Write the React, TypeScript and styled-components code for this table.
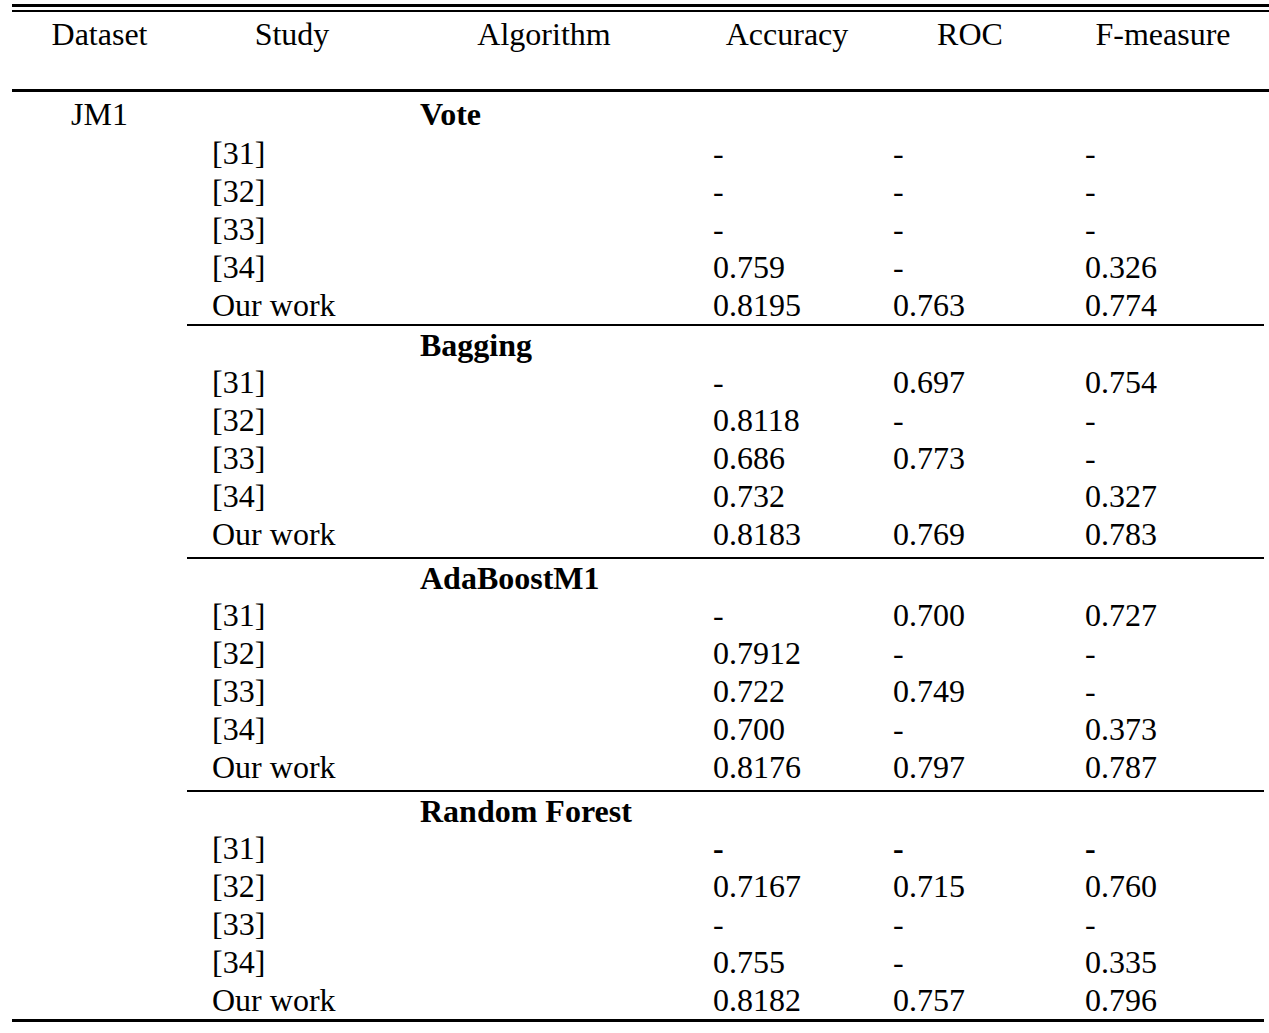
import React from 'react';
import styled, { createGlobalStyle } from 'styled-components';

const GlobalStyle = createGlobalStyle`
  body {
    margin: 0;
    background: #fff;
  }
`;

// study | algorithm | accuracy | roc | f-measure
const BODY_COLS = '210px 294px 192px 174px 1fr';

const Table = styled.div`
  margin-left: 12px;
  padding-top: 4px;
  font-family: 'Liberation Serif', 'Times New Roman', serif;
  font-size: 32px;
  line-height: 38px;
  color: #000;
`;

const DoubleRule = styled.div`
  height: 3px;
  border-top: 3px solid #000;
  border-bottom: 2px solid #000;
`;

const HeaderRow = styled.div`
  display: grid;
  grid-template-columns: 175px ${BODY_COLS};
  height: 74px;
  padding-top: 3px;
  border-bottom: 3px solid #000;
`;

const HeaderCell = styled.div`
  text-align: center;
  white-space: nowrap;
`;

const Body = styled.div`
  display: flex;
  margin-right: 5px;
  border-bottom: 3px solid #000;
`;

const DatasetCell = styled.div`
  width: 175px;
  flex: none;
  padding-top: 3px;
  text-align: center;
`;

const Groups = styled.div`
  flex: 1;
  display: flex;
  flex-direction: column;
`;

const Group = styled.div<{ $first?: boolean; $last?: boolean }>`
  padding-top: ${p => (p.$first ? '3px' : '0')};
  padding-bottom: ${p => (p.$last || p.$first ? '0' : '4px')};
  border-bottom: ${p => (p.$last ? 'none' : '2px solid #000')};
`;

const Heading = styled.div<{ $tall?: boolean }>`
  display: grid;
  grid-template-columns: ${BODY_COLS};
  height: ${p => (p.$tall ? '39px' : '37px')};
  font-weight: bold;
`;

const Row = styled.div`
  display: grid;
  grid-template-columns: ${BODY_COLS};
  height: 38px;
`;

const Cell = styled.div<{ $indent: number; $bold?: boolean }>`
  padding-left: ${p => p.$indent}px;
  white-space: nowrap;
  font-weight: ${p => (p.$bold ? 'bold' : 'inherit')};
`;

type Result = [string, string, string, string];

interface GroupData {
  name: string;
  rows: Result[];
  boldDashes?: boolean;
}

const groups: GroupData[] = [
  {
    name: 'Vote',
    rows: [
      ['[31]', '-', '-', '-'],
      ['[32]', '-', '-', '-'],
      ['[33]', '-', '-', '-'],
      ['[34]', '0.759', '-', '0.326'],
      ['Our work', '0.8195', '0.763', '0.774'],
    ],
  },
  {
    name: 'Bagging',
    rows: [
      ['[31]', '-', '0.697', '0.754'],
      ['[32]', '0.8118', '-', '-'],
      ['[33]', '0.686', '0.773', '-'],
      ['[34]', '0.732', '', '0.327'],
      ['Our work', '0.8183', '0.769', '0.783'],
    ],
  },
  {
    name: 'AdaBoostM1',
    rows: [
      ['[31]', '-', '0.700', '0.727'],
      ['[32]', '0.7912', '-', '-'],
      ['[33]', '0.722', '0.749', '-'],
      ['[34]', '0.700', '-', '0.373'],
      ['Our work', '0.8176', '0.797', '0.787'],
    ],
  },
  {
    name: 'Random Forest',
    boldDashes: true,
    rows: [
      ['[31]', '-', '-', '-'],
      ['[32]', '0.7167', '0.715', '0.760'],
      ['[33]', '-', '-', '-'],
      ['[34]', '0.755', '-', '0.335'],
      ['Our work', '0.8182', '0.757', '0.796'],
    ],
  },
];

const headers = ['Dataset', 'Study', 'Algorithm', 'Accuracy', 'ROC', 'F-measure'];

const App = () => {
  return (
    <>
      <GlobalStyle />
      <Table>
        <DoubleRule />
        <HeaderRow>
          {headers.map(h => (
            <HeaderCell key={h}>{h}</HeaderCell>
          ))}
        </HeaderRow>
        <Body>
          <DatasetCell>JM1</DatasetCell>
          <Groups>
            {groups.map((g, gi) => (
              <Group key={g.name} $first={gi === 0} $last={gi === groups.length - 1}>
                <Heading $tall={gi === 0}>
                  <div />
                  <Cell $indent={23}>{g.name}</Cell>
                </Heading>
                {g.rows.map((r, ri) => {
                  // the first Random Forest row prints its dashes in bold
                  const bold = g.boldDashes && ri === 0;
                  return (
                    <Row key={ri}>
                      <Cell $indent={25}>{r[0]}</Cell>
                      <div />
                      <Cell $indent={22} $bold={bold}>{r[1]}</Cell>
                      <Cell $indent={10} $bold={bold}>{r[2]}</Cell>
                      <Cell $indent={28} $bold={bold}>{r[3]}</Cell>
                    </Row>
                  );
                })}
              </Group>
            ))}
          </Groups>
        </Body>
      </Table>
    </>
  );
};

export default App;
